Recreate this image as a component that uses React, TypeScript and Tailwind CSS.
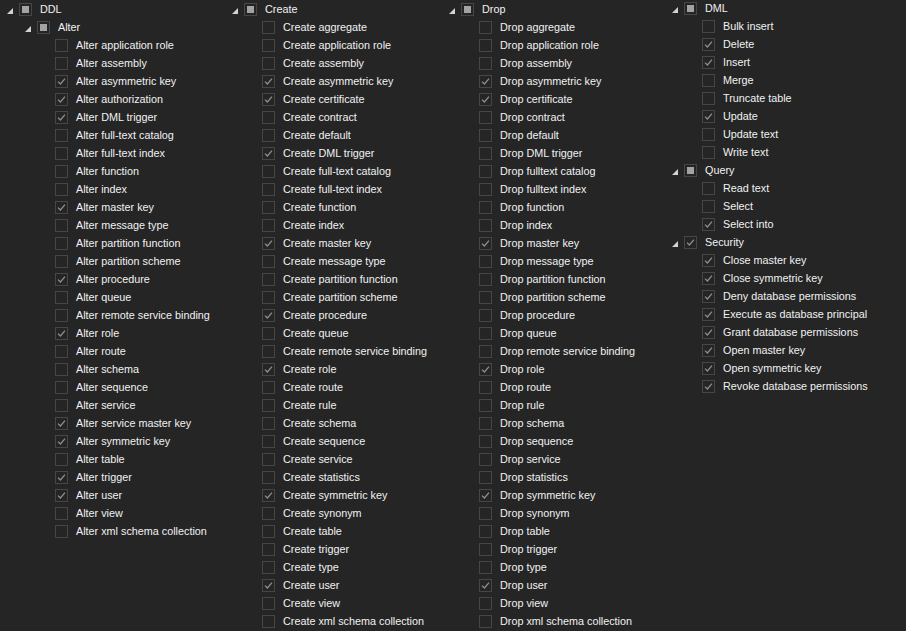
import React from "react";

type State = 0 | 1 | 2; // 0 unchecked, 1 checked, 2 partial

const padByLevel: Record<number, string> = {
  0: "pl-[7px]",
  1: "pl-[25px]",
  2: "pl-[43px]",
};

function Triangle() {
  return (
    <svg width="6" height="6" viewBox="0 0 6 6" className="mt-[3px] shrink-0">
      <polygon points="6,0 6,6 0,6" fill="#d2d2d2" />
    </svg>
  );
}

function Check({ state }: { state: State }) {
  return (
    <div className="ml-[6px] w-[13px] h-[13px] shrink-0 border border-[#464646] flex items-center justify-center">
      {state === 2 && <div className="w-[7px] h-[7px] bg-[#a3a3a3]" />}
      {state === 1 && (
        <svg width="11" height="11" viewBox="0 0 11 11">
          <path d="M2 5.6 L4.4 8 L9 2.6" stroke="#8e8e8e" strokeWidth="1.3" fill="none" />
        </svg>
      )}
    </div>
  );
}

function Row({ label, state, level, expand }: { label: string; state: State; level: number; expand?: boolean }) {
  return (
    <div className={`h-[18px] flex items-center whitespace-nowrap ${padByLevel[level]}`}>
      {expand ? <Triangle /> : <div className="w-[6px] h-[6px] shrink-0" />}
      <Check state={state} />
      <span className="ml-[8px] leading-[18px]">{label}</span>
    </div>
  );
}

type Item = [string, State];

const alter: Item[] = [
  ["Alter application role", 0],
  ["Alter assembly", 0],
  ["Alter asymmetric key", 1],
  ["Alter authorization", 1],
  ["Alter DML trigger", 1],
  ["Alter full-text catalog", 0],
  ["Alter full-text index", 0],
  ["Alter function", 0],
  ["Alter index", 0],
  ["Alter master key", 1],
  ["Alter message type", 0],
  ["Alter partition function", 0],
  ["Alter partition scheme", 0],
  ["Alter procedure", 1],
  ["Alter queue", 0],
  ["Alter remote service binding", 0],
  ["Alter role", 1],
  ["Alter route", 0],
  ["Alter schema", 0],
  ["Alter sequence", 0],
  ["Alter service", 0],
  ["Alter service master key", 1],
  ["Alter symmetric key", 1],
  ["Alter table", 0],
  ["Alter trigger", 1],
  ["Alter user", 1],
  ["Alter view", 0],
  ["Alter xml schema collection", 0],
];

const create: Item[] = [
  ["Create aggregate", 0],
  ["Create application role", 0],
  ["Create assembly", 0],
  ["Create asymmetric key", 1],
  ["Create certificate", 1],
  ["Create contract", 0],
  ["Create default", 0],
  ["Create DML trigger", 1],
  ["Create full-text catalog", 0],
  ["Create full-text index", 0],
  ["Create function", 0],
  ["Create index", 0],
  ["Create master key", 1],
  ["Create message type", 0],
  ["Create partition function", 0],
  ["Create partition scheme", 0],
  ["Create procedure", 1],
  ["Create queue", 0],
  ["Create remote service binding", 0],
  ["Create role", 1],
  ["Create route", 0],
  ["Create rule", 0],
  ["Create schema", 0],
  ["Create sequence", 0],
  ["Create service", 0],
  ["Create statistics", 0],
  ["Create symmetric key", 1],
  ["Create synonym", 0],
  ["Create table", 0],
  ["Create trigger", 0],
  ["Create type", 0],
  ["Create user", 1],
  ["Create view", 0],
  ["Create xml schema collection", 0],
];

const drop: Item[] = [
  ["Drop aggregate", 0],
  ["Drop application role", 0],
  ["Drop assembly", 0],
  ["Drop asymmetric key", 1],
  ["Drop certificate", 1],
  ["Drop contract", 0],
  ["Drop default", 0],
  ["Drop DML trigger", 0],
  ["Drop fulltext catalog", 0],
  ["Drop fulltext index", 0],
  ["Drop function", 0],
  ["Drop index", 0],
  ["Drop master key", 1],
  ["Drop message type", 0],
  ["Drop partition function", 0],
  ["Drop partition scheme", 0],
  ["Drop procedure", 0],
  ["Drop queue", 0],
  ["Drop remote service binding", 0],
  ["Drop role", 1],
  ["Drop route", 0],
  ["Drop rule", 0],
  ["Drop schema", 0],
  ["Drop sequence", 0],
  ["Drop service", 0],
  ["Drop statistics", 0],
  ["Drop symmetric key", 1],
  ["Drop synonym", 0],
  ["Drop table", 0],
  ["Drop trigger", 0],
  ["Drop type", 0],
  ["Drop user", 1],
  ["Drop view", 0],
  ["Drop xml schema collection", 0],
];

const dml: Item[] = [
  ["Bulk insert", 0],
  ["Delete", 1],
  ["Insert", 1],
  ["Merge", 0],
  ["Truncate table", 0],
  ["Update", 1],
  ["Update text", 0],
  ["Write text", 0],
];

const query: Item[] = [
  ["Read text", 0],
  ["Select", 0],
  ["Select into", 1],
];

const security: Item[] = [
  ["Close master key", 1],
  ["Close symmetric key", 1],
  ["Deny database permissions", 1],
  ["Execute as database principal", 1],
  ["Grant database permissions", 1],
  ["Open master key", 1],
  ["Open symmetric key", 1],
  ["Revoke database permissions", 1],
];

function Group({ title, state, items, level }: { title: string; state: State; items: Item[]; level: number }) {
  return (
    <div className="flex flex-col">
      <Row label={title} state={state} level={level} expand />
      {items.map(([l, s]) => (
        <Row key={l} label={l} state={s} level={level + 1} />
      ))}
    </div>
  );
}

export default function App() {
  return (
    <div className="w-[906px] h-[631px] overflow-hidden bg-[#252526] text-[#f1f1f1] text-[10.8px] font-['Liberation_Sans',Arial,sans-serif] flex items-start">
      <div className="w-[225px] shrink-0 flex flex-col">
        <Row label="DDL" state={2} level={0} expand />
        <Group title="Alter" state={2} items={alter} level={1} />
      </div>
      <div className="w-[217px] shrink-0">
        <Group title="Create" state={2} items={create} level={0} />
      </div>
      <div className="w-[223px] shrink-0">
        <Group title="Drop" state={2} items={drop} level={0} />
      </div>
      <div className="flex-1 -mt-px flex flex-col">
        <Group title="DML" state={2} items={dml} level={0} />
        <Group title="Query" state={2} items={query} level={0} />
        <Group title="Security" state={1} items={security} level={0} />
      </div>
    </div>
  );
}
